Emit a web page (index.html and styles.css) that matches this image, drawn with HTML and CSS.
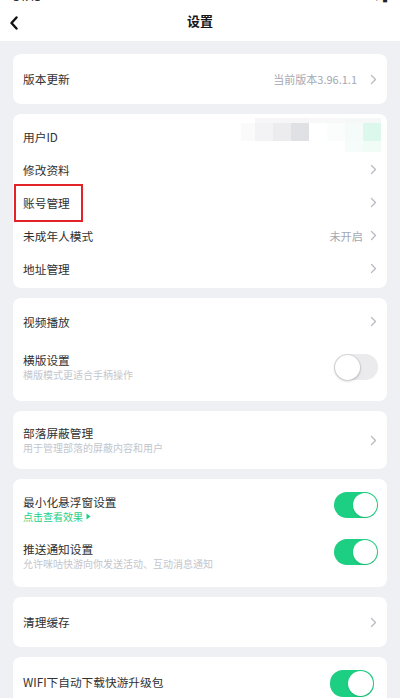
FILE: index.html
```html
<!DOCTYPE html>
<html lang="zh-CN">
<head>
<meta charset="utf-8">
<title>设置</title>
<link rel="stylesheet" href="styles.css">
</head>
<body>
<header class="topbar">
  <div class="status"><span class="time">14:41</span><span class="sicons">▾ ▮</span></div>
  <div class="nav">
    <svg class="back" width="10" height="14" viewBox="0 0 10 14"><polyline points="7.5,1.5 2.5,7 7.5,12.5" fill="none" stroke="#111" stroke-width="2.4" stroke-linecap="round" stroke-linejoin="round"/></svg>
    <h1 class="title">设置</h1>
  </div>
</header>
<main class="list">
  <section class="card">
    <div class="row h50"><span class="label">版本更新</span><span class="value wide">当前版本3.96.1.1</span><svg class="chev" width="7" height="11" viewBox="0 0 7 11"><polyline points="1.5,1.5 5.5,5.5 1.5,9.5" fill="none" stroke="#b8bbc3" stroke-width="1.3" stroke-linecap="round" stroke-linejoin="round"/></svg></div>
  </section>

  <section class="card card-account">
    <div class="row h33"><span class="label">用户ID</span></div>
    <div class="row h33"><span class="label">修改资料</span><svg class="chev" width="7" height="11" viewBox="0 0 7 11"><polyline points="1.5,1.5 5.5,5.5 1.5,9.5" fill="none" stroke="#b8bbc3" stroke-width="1.3" stroke-linecap="round" stroke-linejoin="round"/></svg></div>
    <div class="row h33"><span class="label">账号管理</span><svg class="chev" width="7" height="11" viewBox="0 0 7 11"><polyline points="1.5,1.5 5.5,5.5 1.5,9.5" fill="none" stroke="#b8bbc3" stroke-width="1.3" stroke-linecap="round" stroke-linejoin="round"/></svg></div>
    <div class="row h33"><span class="label">未成年人模式</span><span class="value">未开启</span><svg class="chev" width="7" height="11" viewBox="0 0 7 11"><polyline points="1.5,1.5 5.5,5.5 1.5,9.5" fill="none" stroke="#b8bbc3" stroke-width="1.3" stroke-linecap="round" stroke-linejoin="round"/></svg></div>
    <div class="row h33"><span class="label">地址管理</span><svg class="chev" width="7" height="11" viewBox="0 0 7 11"><polyline points="1.5,1.5 5.5,5.5 1.5,9.5" fill="none" stroke="#b8bbc3" stroke-width="1.3" stroke-linecap="round" stroke-linejoin="round"/></svg></div>
    <div class="mosaic"><div class="m-top"></div><div class="m-mid"></div><div class="m-bot"></div></div>
    <div class="highlight"></div>
  </section>

  <section class="card card-video">
    <div class="row h33"><span class="label">视频播放</span><svg class="chev" width="7" height="11" viewBox="0 0 7 11"><polyline points="1.5,1.5 5.5,5.5 1.5,9.5" fill="none" stroke="#b8bbc3" stroke-width="1.3" stroke-linecap="round" stroke-linejoin="round"/></svg></div>
    <div class="row h58">
      <div class="text"><span class="label">横版设置</span><span class="sub">横版模式更适合手柄操作</span></div>
      <span class="toggle"><span class="knob"></span></span>
    </div>
  </section>

  <section class="card">
    <div class="row h58">
      <div class="text"><span class="label">部落屏蔽管理</span><span class="sub">用于管理部落的屏蔽内容和用户</span></div>
      <svg class="chev" width="7" height="11" viewBox="0 0 7 11"><polyline points="1.5,1.5 5.5,5.5 1.5,9.5" fill="none" stroke="#b8bbc3" stroke-width="1.3" stroke-linecap="round" stroke-linejoin="round"/></svg>
    </div>
  </section>

  <section class="card card-notify">
    <div class="row h47">
      <div class="text"><span class="label">最小化悬浮窗设置</span><span class="sub link">点击查看效果 <svg width="5" height="7" viewBox="0 0 5 7"><polygon points="0.5,0.5 4.5,3.5 0.5,6.5" fill="#1fcf85"/></svg></span></div>
      <span class="toggle on up"><span class="knob"></span></span>
    </div>
    <div class="row h47">
      <div class="text"><span class="label">推送通知设置</span><span class="sub">允许咪咕快游向你发送活动、互动消息通知</span></div>
      <span class="toggle on up"><span class="knob"></span></span>
    </div>
  </section>

  <section class="card">
    <div class="row h50"><span class="label">清理缓存</span><svg class="chev" width="7" height="11" viewBox="0 0 7 11"><polyline points="1.5,1.5 5.5,5.5 1.5,9.5" fill="none" stroke="#b8bbc3" stroke-width="1.3" stroke-linecap="round" stroke-linejoin="round"/></svg></div>
  </section>

  <section class="card">
    <div class="row h50"><span class="label">WIFI下自动下载快游升级包</span><span class="toggle on inset"><span class="knob"></span></span></div>
  </section>
</main>
</body>
</html>
```
FILE: styles.css
```css
* { box-sizing: border-box; }
html, body { margin: 0; padding: 0; }
body {
  background: #eef0f4;
  font-family: "Noto Sans CJK SC", "Noto Sans", "Liberation Sans", sans-serif;
  color: #303133;
  width: 400px;
  overflow: hidden;
}
.topbar {
  background: #fff;
  height: 41px;
  position: relative;
}
.status {
  height: 3px;
  overflow: hidden;
  display: flex;
  justify-content: space-between;
  padding: 0 12px 0 13px;
  font-size: 11px;
  color: #222;
}
.status .time, .status .sicons { margin-top: -11px; line-height: 14px; }
.nav {
  height: 38px;
  display: flex;
  align-items: center;
  justify-content: center;
  position: relative;
}
.back {
  position: absolute;
  left: 9px;
  top: 13px;
}
.title {
  margin: 0;
  font-size: 13px;
  font-weight: 700;
  color: #151515;
  line-height: 16px;
  margin-top: -2px;
}
.list {
  padding: 13px 13px 0;
  display: flex;
  flex-direction: column;
  gap: 10px;
}
.card {
  background: #fff;
  border-radius: 8px;
  position: relative;
}
.card-account { padding: 6px 0 3px; }
.card-video { padding: 7px 0 5px; }
.card-notify { padding: 6px 0 8px; }
.row {
  display: flex;
  align-items: center;
  padding: 0 10px;
}
.h33 { height: 33px; }
.h47 { height: 47px; }
.h50 { height: 50px; }
.h58 { height: 58px; }
.label {
  font-size: 11.7px;
  line-height: 16px;
  color: #303133;
  white-space: nowrap;
}
.text {
  display: flex;
  flex-direction: column;
  flex: 1;
}
.row > .label { flex: 1; }
.sub {
  font-size: 10px;
  line-height: 14px;
  color: #c3c6cd;
  white-space: nowrap;
}
.sub.link {
  color: #1fcf85;
  display: flex;
  align-items: center;
  gap: 3px;
}
.value {
  font-size: 11.2px;
  color: #a4a8b3;
  margin-right: 7px;
  white-space: nowrap;
}
.value.wide { margin-right: 13px; font-size: 11px; }
.chev { flex: none; }
.toggle {
  flex: none;
  width: 44px;
  height: 26px;
  border-radius: 13px;
  background: #ebebed;
  position: relative;
  margin-right: -1px;
}
.knob {
  position: absolute;
  top: 0.5px;
  left: 0.5px;
  width: 25px;
  height: 25px;
  border-radius: 50%;
  background: #fff;
  box-shadow: 0 0 0 1px rgba(0,0,0,0.06), 0 1px 3px rgba(0,0,0,0.22);
}
.toggle.on { background: #1ccf82; }
.toggle.on .knob { left: auto; right: 1px; top: 1px; width: 24px; height: 24px; box-shadow: 0 1px 2px rgba(0,0,0,0.12); }
.toggle.up { margin-top: -8px; }
.toggle.inset { margin-right: 3px; height: 27px; margin-top: 2px; }
.toggle.inset .knob { width: 25px; height: 25px; }
.mosaic {
  position: absolute;
  right: 6px;
  top: 4px;
  width: 140px;
  display: flex;
  flex-direction: column;
}
.m-top {
  height: 5px;
  background: linear-gradient(to right, #ffffff 0 14px, #f6f6f8 14px 68px, #f8f8f9 68px 104px, #f6f7f7 104px);
}
.m-mid {
  height: 18px;
  background: linear-gradient(to right,
    #fafafb 0 14px,
    #f3f3f5 14px 32px,
    #ececef 32px 50px,
    #e0e1e5 50px 68px,
    #ffffff 68px 86px,
    #fbfdfc 86px 104px,
    #f4fbf8 104px 122px,
    #dcf7eb 122px 140px);
}
.m-bot {
  height: 11px;
  background: linear-gradient(to right, #ffffff 0 104px, #f6fcf9 104px 122px, #f2fcf7 122px 140px);
}
.highlight {
  position: absolute;
  left: 1px;
  top: 70px;
  width: 69px;
  height: 38px;
  border: 2px solid #e2232a;
}
```
